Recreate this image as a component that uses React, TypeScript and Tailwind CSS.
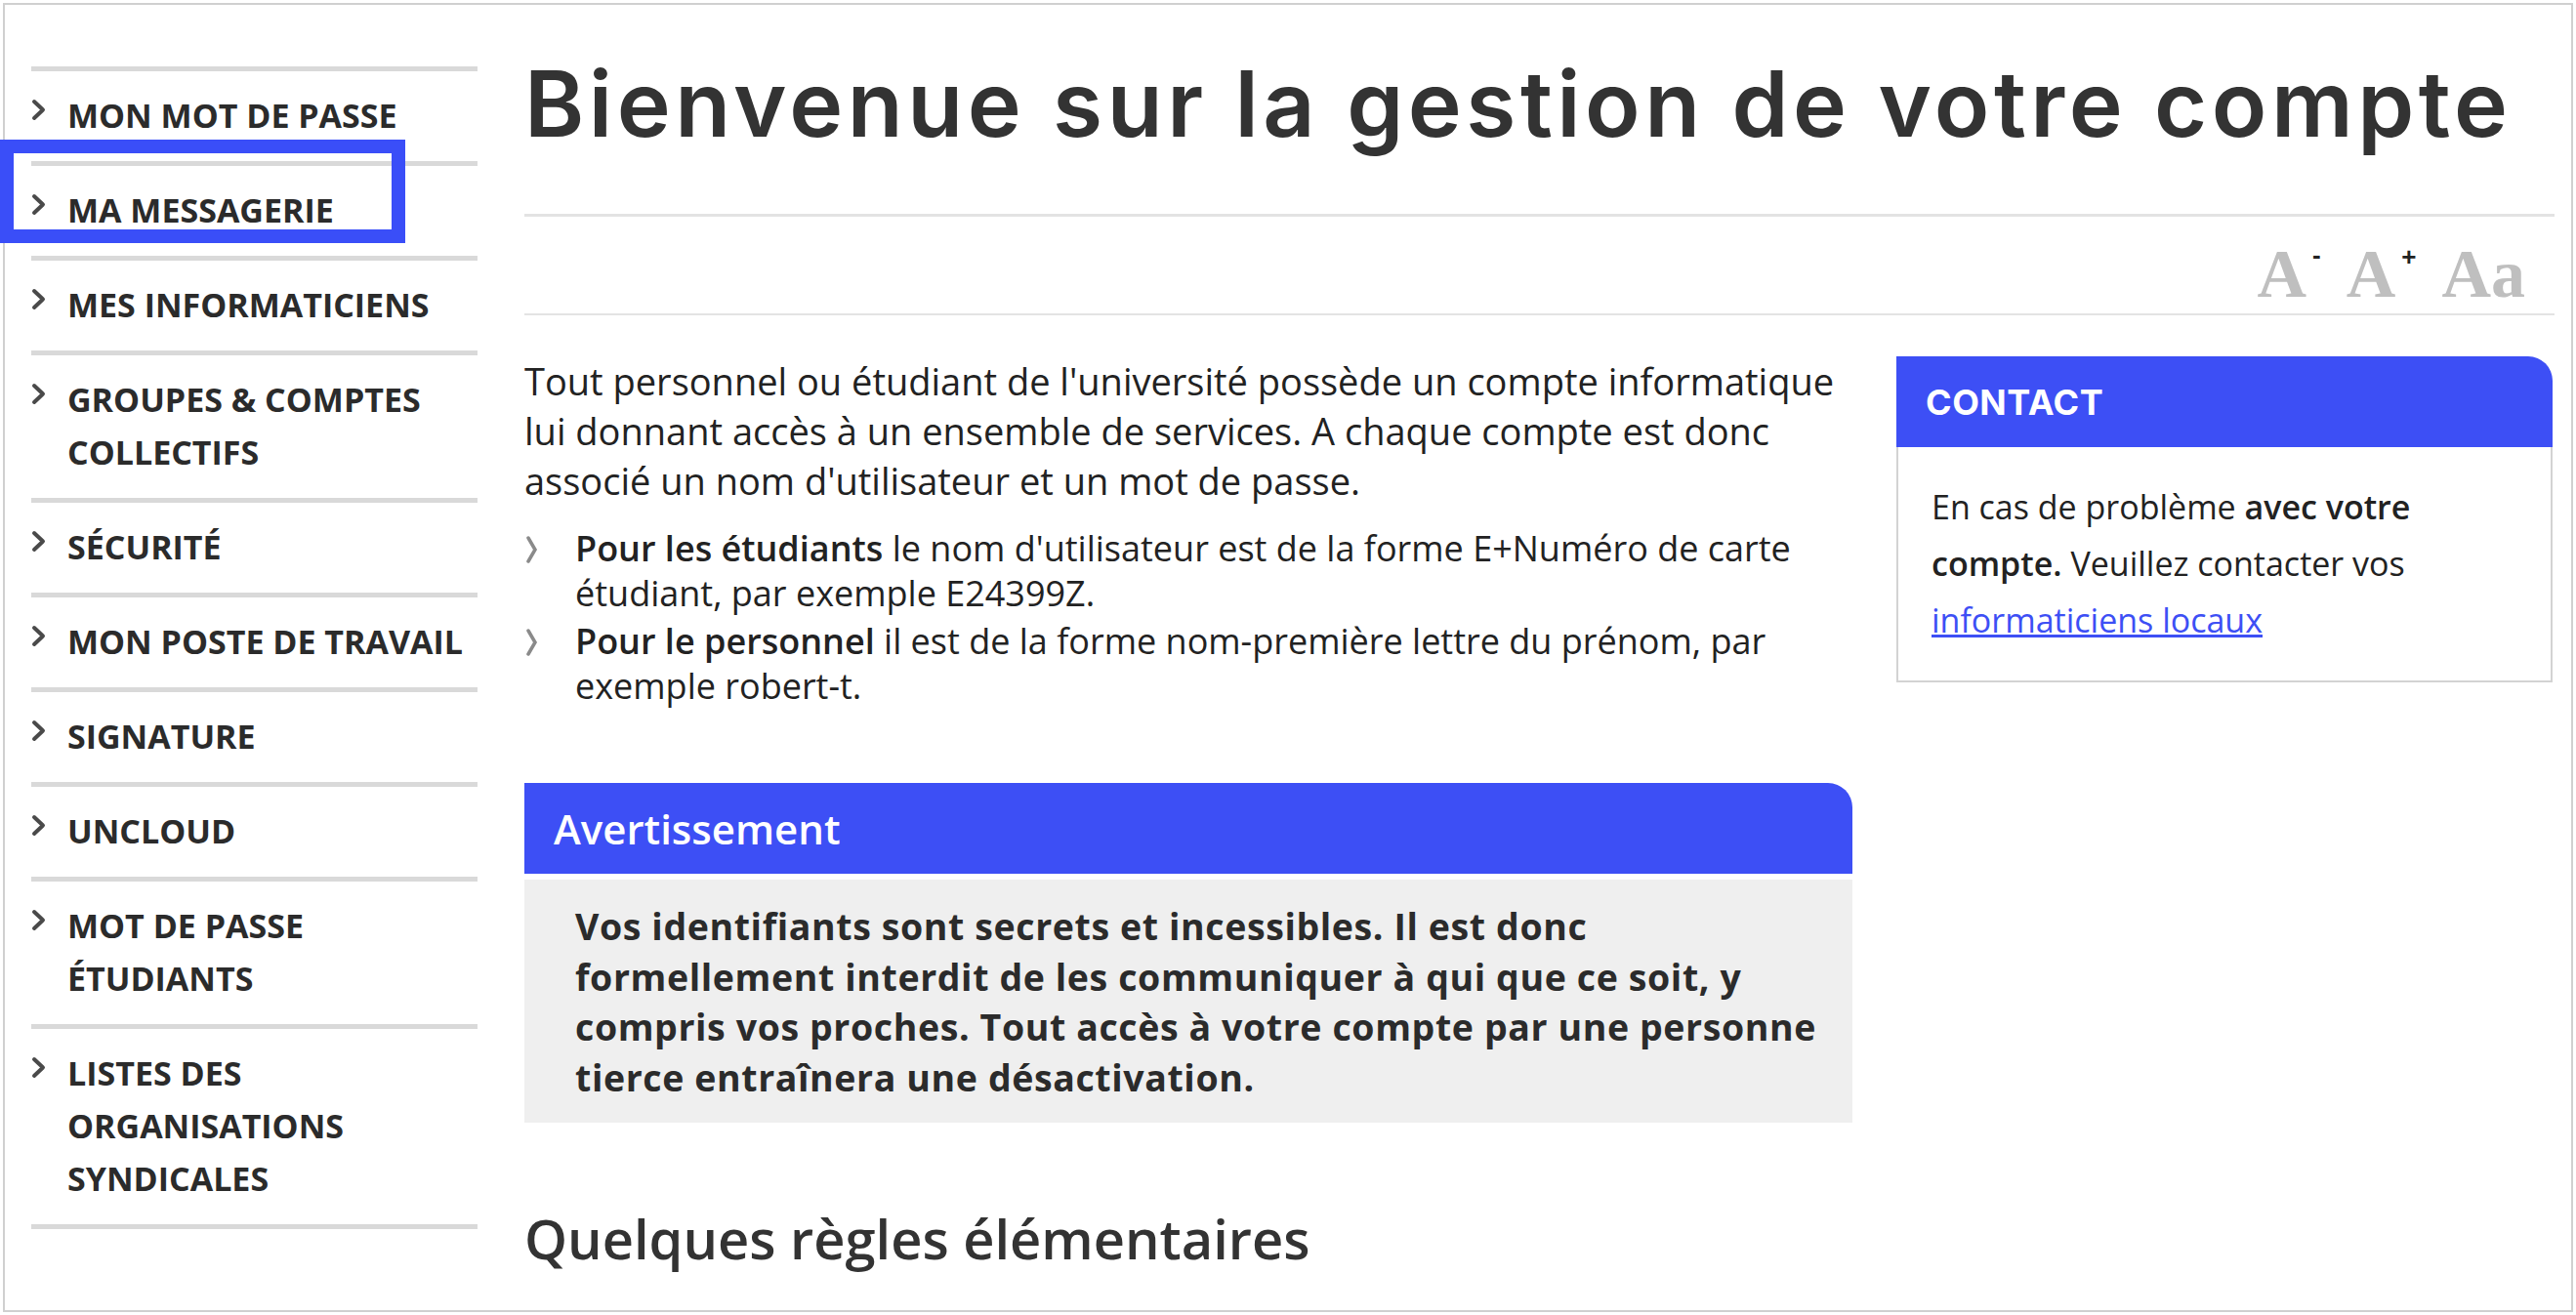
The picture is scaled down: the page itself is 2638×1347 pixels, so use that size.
import React from "react";

const menu = [
  "MON MOT DE PASSE",
  "MA MESSAGERIE",
  "MES INFORMATICIENS",
  "GROUPES & COMPTES COLLECTIFS",
  "SÉCURITÉ",
  "MON POSTE DE TRAVAIL",
  "SIGNATURE",
  "UNCLOUD",
  "MOT DE PASSE ÉTUDIANTS",
  "LISTES DES ORGANISATIONS SYNDICALES",
];

function Chevron() {
  return (
    <svg width="16" height="24" viewBox="0 0 16 24" className="shrink-0 mt-[10px]">
      <path d="M3 3 L12 11.5 L3 20" fill="none" stroke="#4a4a4a" strokeWidth="4" strokeLinejoin="round" strokeLinecap="round" />
    </svg>
  );
}

function Bullet() {
  return (
    <svg width="16" height="28" viewBox="0 0 16 28" className="shrink-0 mt-[10px]">
      <path d="M4 2 L11 14 L4 26" fill="none" stroke="#8a8a8a" strokeWidth="3.5" strokeLinecap="round" />
    </svg>
  );
}

export default function App() {
  return (
    <div className="relative w-[2638px] h-[1347px] bg-white p-[3px] font-['Open_Sans',sans-serif] text-[#222]">
      <div className="h-full border-2 border-[#d0d0d0] flex pl-[27px] pr-[17px] overflow-hidden">
        {/* menu de gauche */}
        <aside className="w-[457px] shrink-0 pt-[63px]">
          <ul className="border-b-[5px] border-[#d9d9d9]">
            {menu.map((item) => (
              <li key={item} className="border-t-[5px] border-[#d9d9d9] pt-[18px] pb-[20px] flex gap-[21px]">
                <Chevron />
                <span className="text-[34px] leading-[54px] font-bold text-[#2b2b2b]">{item}</span>
              </li>
            ))}
          </ul>
        </aside>

        {/* contenu principal */}
        <main className="ml-[48px] flex-1 pt-[55px]">
          <h1 className="font-['Inter',sans-serif] text-[93px] leading-none font-semibold text-[#333] tracking-[4.5px]">
            Bienvenue sur la gestion de votre compte
          </h1>
          <div className="mt-[66px] border-t-[3px] border-[#e3e3e3]" />
          <div className="h-[99px] flex justify-end items-start pt-[24px] pr-[30px] gap-[26px] font-['Liberation_Serif',serif] font-bold text-[70px] leading-none text-[#bfbfbf]">
            <span>
              A<span className="relative -top-[34px] ml-[6px] text-[26px] text-[#222] font-['Liberation_Sans',sans-serif]">-</span>
            </span>
            <span>
              A<span className="relative -top-[32px] ml-[6px] text-[26px] text-[#222] font-['Liberation_Sans',sans-serif]">+</span>
            </span>
            <span>Aa</span>
          </div>
          <div className="border-t-[2px] border-[#e3e3e3]" />

          <div className="mt-[42px] flex gap-[45px]">
            <div className="w-[1360px] shrink-0">
              <p className="text-[38px] leading-[51px]">
                Tout personnel ou étudiant de l'université possède un compte informatique lui donnant accès à un
                ensemble de services. A chaque compte est donc associé un nom d'utilisateur et un mot de passe.
              </p>
              <ul className="mt-[21px] flex flex-col gap-[3px] text-[36px] leading-[46px]">
                <li className="flex gap-[36px]">
                  <Bullet />
                  <span>
                    <b className="font-semibold">Pour les étudiants</b> le nom d'utilisateur est de la forme E+Numéro
                    de carte étudiant, par exemple E24399Z.
                  </span>
                </li>
                <li className="flex gap-[36px]">
                  <Bullet />
                  <span>
                    <b className="font-semibold">Pour le personnel</b> il est de la forme nom-première lettre du
                    prénom, par exemple robert-t.
                  </span>
                </li>
              </ul>

              <div className="mt-[76px]">
                <div className="h-[93px] bg-[#3d4ff5] rounded-tr-[25px] pl-[30px] flex items-center">
                  <span className="text-white text-[42px] font-semibold">Avertissement</span>
                </div>
                <div className="mt-[6px] bg-[#efefef] pl-[52px] pr-[16px] pt-[22px] pb-[21px]">
                  <p className="text-[37.5px] leading-[51.5px] font-bold tracking-[0.6px] text-[#2b2b2b]">
                    Vos identifiants sont secrets et incessibles. Il est donc
                    <br />
                    formellement interdit de les communiquer à qui que ce soit, y
                    <br />
                    compris vos proches. Tout accès à votre compte par une personne
                    <br />
                    tierce entraînera une désactivation.
                  </p>
                </div>
              </div>

              <h2 className="mt-[85px] text-[56px] leading-[67px] font-semibold text-[#333]">
                Quelques règles élémentaires
              </h2>
            </div>

            {/* encadré contact */}
            <div className="w-[672px] shrink-0 self-start">
              <div className="h-[93px] bg-[#3d4ff5] rounded-tr-[25px] pl-[30px] flex items-center">
                <span className="font-['Inter',sans-serif] text-white text-[36px] font-bold tracking-[0.5px]">
                  CONTACT
                </span>
              </div>
              <div className="border-2 border-t-0 border-[#d3d3d3] pl-[34px] pr-[20px] pt-[32px] pb-[33px]">
                <p className="text-[34px] leading-[58px]">
                  En cas de problème <b className="font-semibold">avec votre compte.</b> Veuillez contacter vos{" "}
                  <a href="#" className="text-[#3d4ff5] underline">
                    informaticiens locaux
                  </a>
                </p>
              </div>
            </div>
          </div>
        </main>
      </div>

      {/* cadre de surbrillance */}
      <div className="absolute left-0 top-[143px] w-[415px] h-[106px] border-[14px] border-[#3a4ef8]" />
    </div>
  );
}
